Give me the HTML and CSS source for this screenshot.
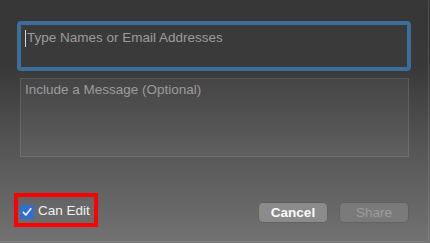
FILE: index.html
```html
<!DOCTYPE html>
<html lang="en">
<head>
  <meta charset="UTF-8">
  <meta name="viewport" content="width=device-width, initial-scale=1.0">
  <title>Share</title>
  <link rel="stylesheet" href="styles.css">
</head>
<body>

  <div class="sheet">
    <div class="field recipients">
      <span class="caret"></span>
      <span class="placeholder">Type Names or Email Addresses</span>
    </div>

    <div class="field message">
      <span class="placeholder">Include a Message (Optional)</span>
    </div>

    <div class="footer">
      <label class="can-edit">
        <span class="check">
          <svg width="14" height="14" viewBox="0 0 14 14">
            <rect x="0" y="0" width="14" height="14" rx="3" fill="#2d6fd8"/>
            <path d="M3.3 7.3 L5.9 10 L10.8 3.8" fill="none" stroke="#fff" stroke-width="1.6" stroke-linecap="round" stroke-linejoin="round"/>
          </svg>
        </span>
        Can Edit
      </label>

      <div class="actions">
        <button class="btn">Cancel</button>
        <button class="btn" disabled>Share</button>
      </div>
    </div>
  </div>

</body>
</html>
```

FILE: styles.css
```css
body {
  margin: 0;
  padding: 0;
  height: 243px;
  background: linear-gradient(#363636 0%, #393939 28%, #555555 60%, #727272 100%);
  font-family: "Liberation Sans", Arial, sans-serif;
  font-size: 13.5px;
}
.sheet {
  box-sizing: border-box;
  width: 429px;
  height: 242px;
  padding: 21px 17px 0 17px;
  border-right: 1px solid rgba(255, 255, 255, 0.1);
  border-bottom: 1px solid rgba(255, 255, 255, 0.1);
}
.field {
  box-sizing: border-box;
  color: #9c9c9c;
}
.recipients {
  display: flex;
  align-items: flex-start;
  height: 50px;
  padding: 5px 0 0 4px;
  border: 4px solid #3b6e9a;
  border-radius: 4px;
  background-color: #3a3a3a;
}
.caret {
  width: 1px;
  height: 17px;
  margin-right: 1px;
  background-color: #d8d8d8;
}
.message {
  height: 79px;
  margin: 7px 2px 0 3px;
  padding: 3px 0 0 4px;
  border: 1px solid rgba(255, 255, 255, 0.11);
  background-color: rgba(255, 255, 255, 0.045);
}
.footer {
  display: flex;
  justify-content: space-between;
  align-items: flex-start;
  margin-top: 36px;
}
.can-edit {
  display: flex;
  align-items: center;
  gap: 4px;
  box-sizing: border-box;
  height: 34px;
  margin-left: -3px;
  padding: 0 4px 0 2px;
  border: 4px solid #ff0000;
  color: #f2f2f2;
}
.check {
  display: flex;
  margin-top: 3px;
}
.actions {
  display: flex;
  gap: 13px;
  margin: 10px 3px 0 0;
}
.btn {
  width: 68px;
  height: 19px;
  padding: 0;
  border: none;
  border-radius: 4px;
  background-color: #8b8b8b;
  box-shadow: 0 0 0 0.5px rgba(0, 0, 0, 0.15);
  color: #fafafa;
  font-family: "Liberation Sans", Arial, sans-serif;
  font-size: 13.5px;
  font-weight: bold;
}
.btn:disabled {
  background-color: #7a7a7a;
  color: #9c9c9c;
  font-weight: normal;
}
```
